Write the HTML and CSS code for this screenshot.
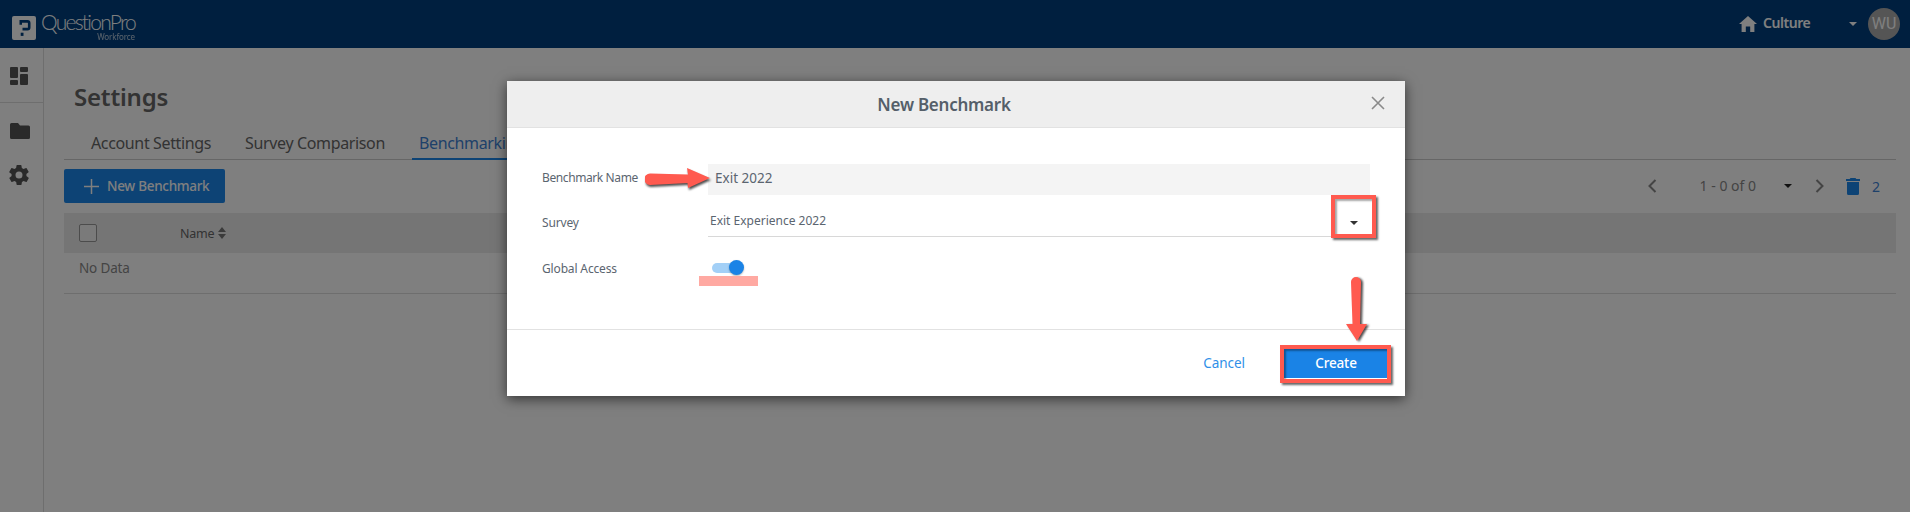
FILE: index.html
```html
<!DOCTYPE html>
<html lang="en">
<head>
<meta charset="utf-8">
<title>Settings - New Benchmark</title>
<link rel="stylesheet" href="styles.css">
</head>
<body>
<div class="app">
  <header class="topbar">
    <div class="logo">
      <svg class="logo-mark" viewBox="0 0 24 24"><rect width="24" height="24" rx="2" fill="#fff"/><path d="M7.500 4h8a3 3 0 0 1 3 3v4.500a3 3 0 0 1-3 3h-5v-2.700h5a.4.4 0 0 0 .4-.4V7.100a.4.4 0 0 0-.4-.4H10v2H7.500z" fill="#003e7e"/><rect x="8.700" y="16.700" width="2.800" height="3.200" fill="#003e7e"/></svg>
      <div class="logo-text"><span class="logo-name">QuestionPro</span><span class="logo-sub">Workforce</span></div>
    </div>
    <div class="top-right">
      <svg class="home" viewBox="0 0 18 16"><path d="M9 0 0 8h2.600v8h4.200v-5.400h4.400V16h4.200V8H18z" fill="#fff"/></svg>
      <span class="culture">Culture</span>
      <span class="caret caret-top"></span>
      <span class="avatar">WU</span>
    </div>
  </header>
  <div class="main">
    <aside class="sidebar">
      <div class="side-sec first">
        <svg class="ic-dash" viewBox="0 0 18 18"><path d="M1 0h6a1 1 0 0 1 1 1v9a1 1 0 0 1-1 1H1a1 1 0 0 1-1-1V1a1 1 0 0 1 1-1zM11 0h6a1 1 0 0 1 1 1v3a1 1 0 0 1-1 1h-6a1 1 0 0 1-1-1V1a1 1 0 0 1 1-1zM11 7h6a1 1 0 0 1 1 1v9a1 1 0 0 1-1 1h-6a1 1 0 0 1-1-1V8a1 1 0 0 1 1-1zM1 13h6a1 1 0 0 1 1 1v3a1 1 0 0 1-1 1H1a1 1 0 0 1-1-1v-3a1 1 0 0 1 1-1z" fill="#555"/></svg>
      </div>
      <div class="side-sec">
        <svg class="ic-folder" viewBox="0 0 20 16"><path d="M1.500 0H8l2 2.500h8.500A1.500 1.500 0 0 1 20 4v10.500a1.500 1.500 0 0 1-1.500 1.500h-17A1.500 1.500 0 0 1 0 14.500v-13A1.500 1.500 0 0 1 1.500 0z" fill="#555"/></svg>
        <svg class="ic-gear" viewBox="0 0 24 24"><path d="M19.400 13c.04-.33.06-.66.06-1s-.02-.67-.06-1l2.100-1.650a.5.5 0 0 0 .12-.64l-2-3.460a.5.5 0 0 0-.6-.22l-2.500 1a7.300 7.300 0 0 0-1.700-1l-.38-2.650A.5.5 0 0 0 14 2h-4a.5.5 0 0 0-.5.42L9.100 5.070a7.700 7.700 0 0 0-1.700 1l-2.500-1a.5.5 0 0 0-.6.22l-2 3.460a.5.500 0 0 0 .12.64L4.600 11c-.04.33-.06.66-.06 1s.02.67.06 1l-2.100 1.650a.5.5 0 0 0-.12.64l2 3.460c.12.22.38.3.6.22l2.500-1c.52.4 1.080.73 1.700 1l.38 2.650c.05.24.26.42.5.42h4c.25 0 .46-.18.5-.42l.38-2.650a7.700 7.700 0 0 0 1.700-1l2.500 1c.22.08.48 0 .6-.22l2-3.460a.5.5 0 0 0-.12-.64zM12 15.500a3.500 3.500 0 1 1 0-7 3.500 3.500 0 0 1 0 7z" fill="#555"/></svg>
      </div>
    </aside>
    <main class="content">
      <h1 class="title">Settings</h1>
      <nav class="tabs">
        <a class="tab">Account Settings</a>
        <a class="tab">Survey Comparison</a>
        <a class="tab active">Benchmarking</a>
      </nav>
      <div class="toolbar">
        <button class="btn-new"><svg class="plus" viewBox="0 0 15 15"><path d="M6.750 0h1.500v6.750H15v1.500H8.250V15h-1.500V8.250H0v-1.500h6.750z" fill="#fff"/></svg>New Benchmark</button>
        <div class="pager">
          <svg class="chev" viewBox="0 0 9 14"><path d="M7.500 1 1.500 7l6 6" fill="none" stroke="#888" stroke-width="2"/></svg>
          <span class="pager-text">1 - 0 of 0</span>
          <span class="caret caret-dark"></span>
          <svg class="chev" viewBox="0 0 9 14"><path d="m1.500 1 6 6-6 6" fill="none" stroke="#888" stroke-width="2"/></svg>
          <svg class="trash" viewBox="0 0 14 17"><path d="M4.500 0h5l.8 1H14v2H0V1h3.700zM1 4h12v11.500a1.500 1.500 0 0 1-1.500 1.500h-9A1.500 1.500 0 0 1 1 15.500z" fill="#1b86ea"/></svg>
          <span class="trash-count">2</span>
        </div>
      </div>
      <div class="thead">
        <span class="checkbox"></span>
        <span class="th-name">Name</span>
        <svg class="sort" viewBox="0 0 8 12"><path d="M4 0 8 5H0zM0 7h8l-4 5z" fill="#777"/></svg>
      </div>
      <div class="trow">No Data</div>
    </main>
  </div>
</div>

<div class="overlay">
  <section class="modal">
    <header class="modal-head">
      <h2 class="modal-title">New Benchmark</h2>
      <svg class="close" viewBox="0 0 14 14"><path d="m1 1 12 12M13 1 1 13" stroke="#8a8a8a" stroke-width="1.600" fill="none"/></svg>
    </header>
    <div class="modal-body">
      <div class="form-row row-name">
        <label class="lbl">Benchmark Name</label>
        <div class="field-name">Exit 2022</div>
      </div>
      <div class="form-row row-survey">
        <label class="lbl">Survey</label>
        <div class="field-survey"><span>Exit Experience 2022</span><span class="caret caret-dark2"></span></div>
      </div>
      <div class="form-row row-global">
        <label class="lbl">Global Access</label>
        <div class="toggle"><span class="track"></span><span class="knob"></span></div>
      </div>
    </div>
    <footer class="modal-foot">
      <a class="cancel">Cancel</a>
      <button class="create">Create</button>
    </footer>
  </section>
</div>

<svg class="mark mark-arrow-right" viewBox="0 0 67 22"><path d="M5 6.500 43 7.500 42 1 65 11 43 21 42.500 16 5 18a5.750 5.750 0 0 1 0-11.500z" fill="#ff5a4f"/></svg>
<svg class="mark mark-arrow-down" viewBox="0 0 23 66"><path d="M6 5a5 5 0 0 1 10 0l-1 42h7L12 64 1 47h6.500z" fill="#ff5a4f"/></svg>
<div class="mark mark-box mark-box-caret"></div>
<div class="mark mark-box mark-box-create"></div>
<div class="mark mark-strip"></div>
</body>
</html>
```

FILE: styles.css
```css
* { box-sizing: border-box; }
html, body { margin: 0; height: 100%; }
body {
  width: 1910px;
  height: 512px;
  overflow: hidden;
  background: #fff;
  font-family: "Noto Sans", "Open Sans", sans-serif;
  color: #555;
  position: relative;
}
.app { display: flex; flex-direction: column; height: 512px; }
.topbar {
  height: 48px;
  background: #003e7e;
  display: flex;
  align-items: center;
  justify-content: space-between;
  padding: 0 10px 0 12px;
  color: #fff;
  flex: none;
}
.logo { display: flex; align-items: center; gap: 5px; }
.logo-mark { width: 24px; height: 24px; margin-top: 8px; }
.logo-text { display: flex; flex-direction: column; margin-top: -2px; }
.logo-name { font-family: "Lato", sans-serif; font-weight: 300; font-size: 21px; line-height: 26px; letter-spacing: -1.750px; margin-top: 4px; }
.logo-sub { font-size: 8px; line-height: 9px; text-align: right; margin-top: -3px; opacity: .7; letter-spacing: -.1px; }
.top-right { display: flex; align-items: center; }
.home { width: 18px; height: 16px; margin-right: 6px; }
.culture { font-size: 14px; font-weight: 600; width: 86px; letter-spacing: -.45px; line-height: 18px; margin-top: -2px; }
.caret { display: inline-block; width: 0; height: 0; border-left: 4px solid transparent; border-right: 4px solid transparent; border-top: 4px solid #fff; }
.caret-top { margin-right: 11px; }
.avatar {
  width: 32px; height: 32px; border-radius: 50%;
  background: #aaa; color: #fff; font: 16px/32px "Roboto", sans-serif; text-align: center;
}
.main { flex: 1; display: flex; min-height: 0; }
.sidebar { width: 44px; flex: none; border-right: 1px solid #ddd; }
.side-sec { padding: 19px 10px 0; display: flex; flex-direction: column; }
.side-sec.first { height: 55px; border-bottom: 1px solid #ddd; }
.side-sec:not(.first) { padding-top: 20px; }
.ic-dash { width: 18px; height: 18px; }
.ic-folder { width: 20px; height: 16px; }
.ic-gear { width: 24px; height: 24px; margin: 24px 0 0 -3px; }
.content { flex: 1; padding: 0 14px 0 20px; min-width: 0; }
.title { margin: 36px 0 0 10px; font-size: 24px; line-height: 26px; font-weight: 600; color: #666; letter-spacing: -.2px; }
.tabs { display: flex; margin-top: 19px; height: 31px; border-bottom: 1px solid #ccc; padding-left: 20px; gap: 20px; }
.tab { font-size: 16px; line-height: 28px; padding: 0 7px; color: #666; height: 31px; letter-spacing: -.36px; white-space: nowrap; }
.tab.active { color: #3d82d4; border-bottom: 2px solid #1b86ea; }
.toolbar { display: flex; justify-content: space-between; align-items: center; margin-top: 9px; height: 34px; }
.btn-new {
  width: 161px; height: 34px; border: 0; border-radius: 2px; background: #1b86ea; color: #fff;
  font: 500 13.500px "Noto Sans", sans-serif; letter-spacing: -.3px; display: flex; align-items: center; padding: 0 0 0 20px; gap: 8px;
}
.plus { width: 15px; height: 15px; }
.pager { display: flex; align-items: center; height: 34px; padding-right: 16px; color: #888; font-size: 14px; }
.chev { width: 9px; height: 14px; }
.pager-text { margin: 0 28px 0 43px; line-height: 17px; padding-bottom: 2px; }
.caret-dark { border-top-color: #222; margin-right: 23px; }
.trash { width: 14px; height: 17px; margin-left: 22px; margin-right: 12px; }
.trash-count { color: #3d82d4; }
.thead { display: flex; align-items: center; margin-top: 10px; height: 40px; background: #ebebeb; padding-left: 15px; }
.checkbox { width: 18px; height: 18px; border: 1px solid #999; border-radius: 2px; margin-right: 83px; background: #f4f4f4; }
.th-name { font-size: 12.500px; color: #666; margin-right: 4px; letter-spacing: -.2px; }
.sort { width: 8px; height: 12px; }
.trow { height: 41px; border-bottom: 1px solid #ddd; padding-left: 15px; font-size: 13.500px; line-height: 30px; color: #888; letter-spacing: -.15px; }

.overlay {
  position: absolute; inset: 0;
  background: rgba(0, 0, 0, .5);
  padding: 81px 505px 0 507px;
}
.modal {
  width: 898px; height: 315px; background: #fff;
  box-shadow: 0 3px 12px rgba(0, 0, 0, .6);
  display: flex; flex-direction: column;
}
.modal-head {
  height: 47px; background: #eee; border-bottom: 1px solid #e2e2e2; flex: none;
  display: flex; align-items: center; justify-content: center; position: relative; padding-right: 24px;
}
.modal-title { margin: 0; font-size: 17px; font-weight: 600; color: #555f69; letter-spacing: -.25px; }
.close { width: 14px; height: 14px; position: absolute; right: 20px; top: 15px; }
.modal-body { height: 201px; flex: none; padding: 36px 35px 0 35px; }
.form-row { display: flex; align-items: center; }
.lbl { width: 166px; font-size: 12px; color: #5b6570; flex: none; letter-spacing: -.15px; }
.row-name { height: 31px; }
.row-name .lbl { letter-spacing: -.4px; line-height: 28px; align-self: flex-start; }
.field-name { flex: 1; height: 31px; background: #f4f4f4; font-size: 13.500px; line-height: 28px; padding-left: 7px; color: #5b6570; }
.row-survey { height: 42px; align-items: flex-start; }
.row-survey .lbl { line-height: 55px; }
.field-survey {
  flex: 1; height: 42px; border-bottom: 1px solid #d8d8d8; font-size: 12px; line-height: 52px;
  padding-left: 2px; color: #5b6570; display: flex; justify-content: space-between; align-items: flex-start;
}
.caret-dark2 { border-top-color: #333; margin: 26px 12px 0 0; }
.row-global { margin-top: 16px; height: 30px; }
.toggle { position: relative; width: 40px; height: 16px; margin-left: 4px; }
.track { position: absolute; left: 0; top: 3px; width: 26px; height: 10px; border-radius: 5px; background: #a3d0f7; }
.knob { position: absolute; left: 17px; top: 0; width: 15px; height: 15px; border-radius: 50%; background: #1a83e6; box-shadow: 0 1px 2px rgba(0,0,0,.3); }
.modal-foot { flex: 1; border-top: 1px solid #e2e2e2; display: flex; align-items: center; justify-content: flex-end; padding: 0 17px 0 0; gap: 39px; }
.cancel { font-size: 13.500px; color: #2f8fe8; letter-spacing: -.05px; }
.create { width: 104px; height: 30px; border: 0; background: #1a83e6; color: #fff; font: 500 13.500px "Noto Sans", sans-serif; letter-spacing: -.15px; }

.mark { position: absolute; }
.mark-arrow-right { left: 645px; top: 167px; width: 67px; height: 22px; filter: drop-shadow(1px 2px 1px rgba(0,0,0,.7)); }
.mark-arrow-down { left: 1345px; top: 277px; width: 23px; height: 66px; filter: drop-shadow(2px 1px 1px rgba(0,0,0,.7)); }
.mark-box { border: 4px solid #ff5a4f; box-shadow: 2px 2px 2px rgba(0,0,0,.6), inset 2px 2px 2px rgba(0,0,0,.35); }
.mark-box-caret { left: 1331px; top: 195px; width: 45px; height: 43px; }
.mark-box-create { left: 1280px; top: 345px; width: 111px; height: 38px; }
.mark-strip { left: 699px; top: 276px; width: 59px; height: 10px; background: #ffa9a2; }
```
